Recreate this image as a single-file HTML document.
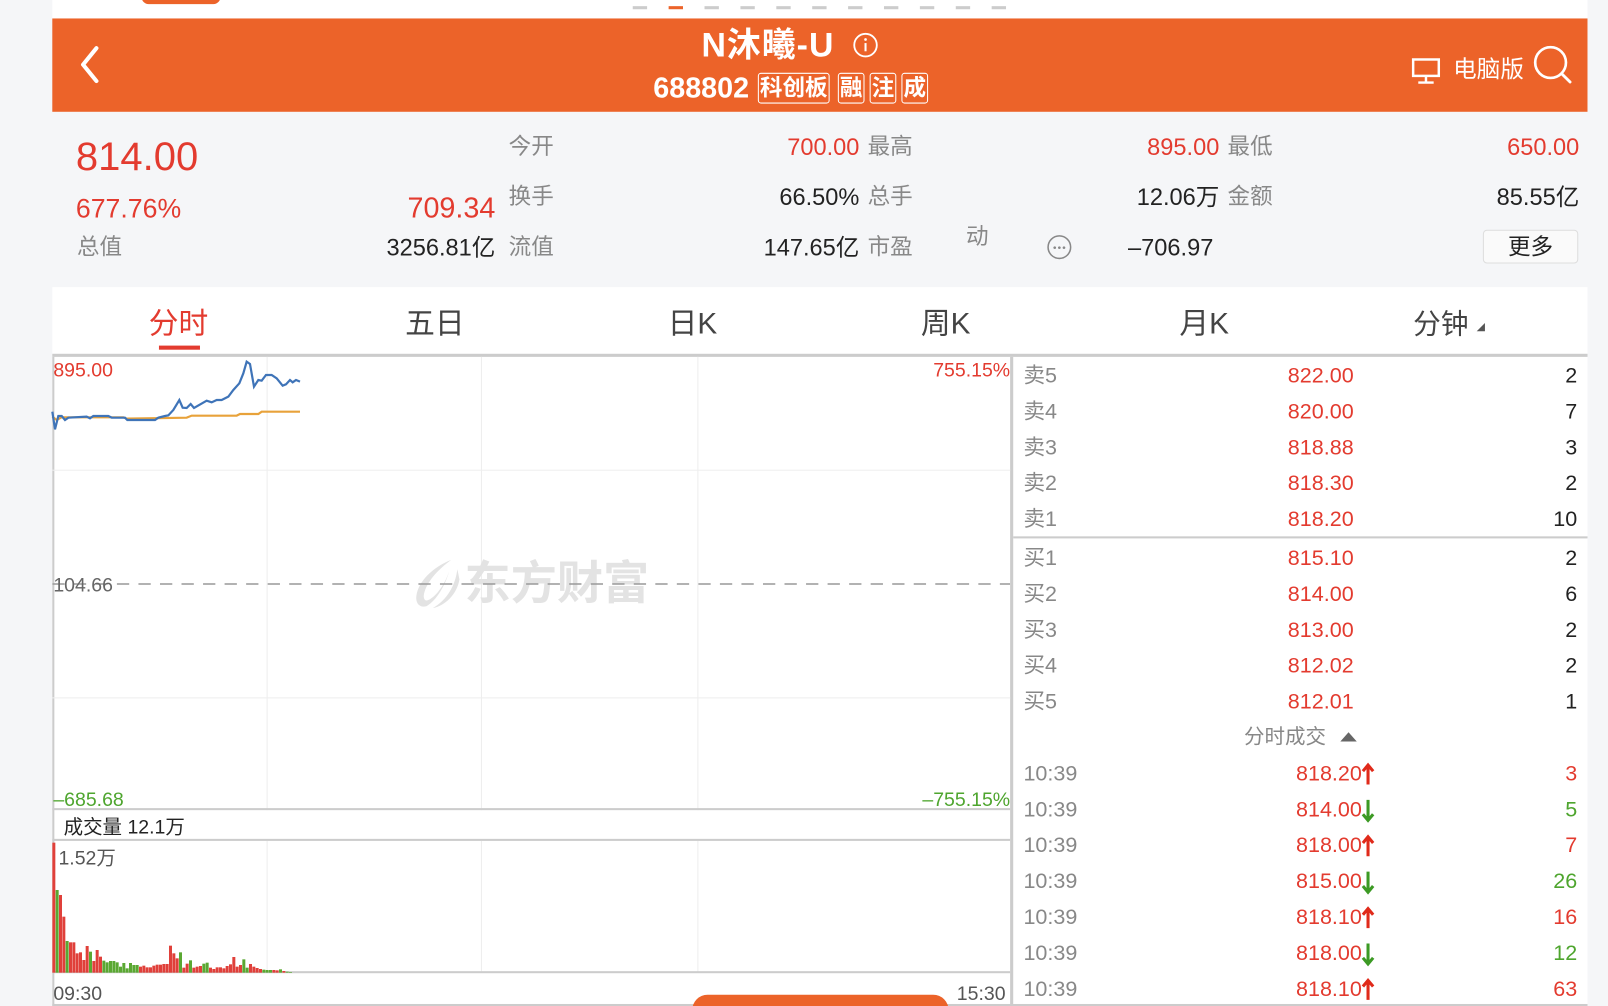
<!DOCTYPE html>
<html><head><meta charset="utf-8"><style>
html,body{margin:0;padding:0;width:1608px;height:1006px;overflow:hidden;background:#f5f6f8;}
#w{position:absolute;left:0;top:0;width:1568px;height:981px;overflow:hidden;transform:scale(1.02551);transform-origin:0 0;font-family:"Liberation Sans","Noto Sans CJK SC",sans-serif;}
.a{position:absolute;white-space:nowrap;line-height:1;}
.r{color:#e33b2f}.g{color:#4ea52e}.k{color:#222}.gr{color:#888}
.ra{text-align:right}
.lb{font-size:22px;color:#888;}
.v{font-size:23px;}
.ob{font-size:21px;}
.tab{font-size:29px;color:#444;top:302px}
</style></head><body>
<div id="w">
<div class="a" style="left:51px;top:0;width:1497px;height:18px;background:#fff"></div>
<div class="a" style="left:138px;top:-10px;width:77px;height:14px;background:#ec6329;border-radius:7px"></div>
<div class="a" style="left:617px;top:6px;width:14px;height:3px;background:#ccc;box-shadow:70px 0 #ccc,105px 0 #ccc,140px 0 #ccc,175px 0 #ccc,210px 0 #ccc,245px 0 #ccc,280px 0 #ccc,315px 0 #ccc,350px 0 #ccc"></div>
<div class="a" style="left:652px;top:6px;width:14px;height:3px;background:#ec6329"></div>
<div class="a" style="left:51px;top:18px;width:1497px;height:91px;background:#ec6329"></div>
<svg class="a" style="left:72px;top:42px" width="30" height="42"><path d="M22 5 L9 21 L22 37" stroke="#fff" stroke-width="4" fill="none" stroke-linecap="round" stroke-linejoin="round"/></svg>
<div class="a" style="left:684px;top:27px;font-size:33px;font-weight:bold;color:#fff;letter-spacing:1px">N沐曦-U</div>
<svg class="a" style="left:831px;top:31px" width="26" height="26"><circle cx="13" cy="13" r="11" stroke="#fff" stroke-width="1.8" fill="none"/><rect x="12" y="11" width="2" height="8" fill="#fff"/><circle cx="13" cy="7.5" r="1.3" fill="#fff"/></svg>
<div class="a" style="left:637px;top:72px;font-size:28px;font-weight:bold;color:#fff">688802</div>
<div class="a" style="left:739px;top:71px;height:28px;border:1.5px solid #fff;border-radius:3px;font-size:22px;font-weight:bold;color:#fff;line-height:28px;padding:0 1px">科创板</div>
<div class="a" style="left:817px;top:71px;height:28px;border:1.5px solid #fff;border-radius:3px;font-size:22px;font-weight:bold;color:#fff;line-height:28px;padding:0 1px">融</div>
<div class="a" style="left:848px;top:71px;height:28px;border:1.5px solid #fff;border-radius:3px;font-size:22px;font-weight:bold;color:#fff;line-height:28px;padding:0 1px">注</div>
<div class="a" style="left:879px;top:71px;height:28px;border:1.5px solid #fff;border-radius:3px;font-size:22px;font-weight:bold;color:#fff;line-height:28px;padding:0 1px">成</div>
<svg class="a" style="left:1376px;top:56px" width="30" height="27"><rect x="2" y="2" width="25" height="16" stroke="#fff" stroke-width="2.4" fill="none"/><path d="M14.5 18 V24 M7 24.5 H22" stroke="#fff" stroke-width="2.4"/></svg>
<div class="a" style="left:1417px;top:56px;font-size:23px;color:#fff">电脑版</div>
<svg class="a" style="left:1493px;top:42px" width="42" height="42"><circle cx="19" cy="19" r="15" stroke="#fff" stroke-width="2.6" fill="none"/><path d="M30 30 L38 38" stroke="#fff" stroke-width="2.8" stroke-linecap="round"/></svg>

<div class="a r" style="left:74px;top:134px;font-size:39px">814.00</div>
<div class="a r" style="left:74px;top:190px;font-size:26px">677.76%</div>
<div class="a r ra" style="left:330px;width:153px;top:189px;font-size:28px">709.34</div>
<div class="a lb" style="left:75px;top:230px">总值</div>
<div class="a k ra v" style="left:300px;width:183px;top:230px">3256.81亿</div>
<div class="a lb" style="left:496px;top:132px">今开</div>
<div class="a lb" style="left:496px;top:181px">换手</div>
<div class="a lb" style="left:496px;top:230px">流值</div>
<div class="a r ra v" style="left:638px;width:200px;top:132px">700.00</div>
<div class="a k ra v" style="left:638px;width:200px;top:181px">66.50%</div>
<div class="a k ra v" style="left:638px;width:200px;top:230px">147.65亿</div>
<div class="a lb" style="left:846px;top:132px">最高</div>
<div class="a lb" style="left:846px;top:181px">总手</div>
<div class="a lb" style="left:846px;top:230px">市盈</div>
<div class="a lb" style="left:942px;top:220px">动</div>
<svg class="a" style="left:1020px;top:228px" width="26" height="26"><circle cx="13" cy="13" r="11" stroke="#888" stroke-width="1.5" fill="none"/><circle cx="8.5" cy="13.5" r="1.3" fill="#888"/><circle cx="13" cy="13.5" r="1.3" fill="#888"/><circle cx="17.5" cy="13.5" r="1.3" fill="#888"/></svg>
<div class="a k v" style="left:1100px;top:230px">–706.97</div>
<div class="a r ra v" style="left:989px;width:200px;top:132px">895.00</div>
<div class="a k ra v" style="left:989px;width:200px;top:181px">12.06万</div>
<div class="a lb" style="left:1197px;top:132px">最低</div>
<div class="a lb" style="left:1197px;top:181px">金额</div>
<div class="a r ra v" style="left:1340px;width:200px;top:132px">650.00</div>
<div class="a k ra v" style="left:1340px;width:200px;top:181px">85.55亿</div>
<div class="a" style="left:1446px;top:224px;width:91px;height:31px;border:1px solid #ddd;border-radius:4px;background:#fafafa;font-size:22px;color:#222;text-align:center;line-height:31px">更多</div>

<div class="a" style="left:51px;top:280px;width:1497px;height:65px;background:#fff"></div>
<div class="a r" style="left:145px;top:302px;font-size:29px">分时</div>
<div class="a" style="left:155px;top:337px;width:40px;height:4px;background:#e33b2f"></div>
<div class="a tab" style="left:395px">五日</div>
<div class="a tab" style="left:651px">日K</div>
<div class="a tab" style="left:898px">周K</div>
<div class="a tab" style="left:1150px">月K</div>
<div class="a tab" style="left:1378px;font-size:27px;top:303px">分钟</div>
<svg class="a" style="left:1438px;top:313px" width="12" height="12"><path d="M2 10 L10 10 L10 2 Z" fill="#555"/></svg>

<div class="a" style="left:51px;top:345px;width:1497px;height:636px;background:#fff"></div>
<div class="a" style="left:51px;top:345px;width:1497px;height:3px;background:#ccc"></div>
<div class="a" style="left:51px;top:348px;width:2px;height:633px;background:#ccc"></div>
<div class="a" style="left:985px;top:348px;width:3px;height:633px;background:#ccc"></div>
<div class="a" style="left:260px;top:348px;width:1px;height:442px;background:#eee"></div>
<div class="a" style="left:469px;top:348px;width:1px;height:442px;background:#eee"></div>
<div class="a" style="left:680px;top:348px;width:1px;height:442px;background:#eee"></div>
<div class="a" style="left:260px;top:820px;width:1px;height:128px;background:#eee"></div>
<div class="a" style="left:469px;top:820px;width:1px;height:128px;background:#eee"></div>
<div class="a" style="left:680px;top:820px;width:1px;height:128px;background:#eee"></div>
<div class="a" style="left:51px;top:458px;width:934px;height:1px;background:#eee"></div>
<div class="a" style="left:51px;top:680px;width:934px;height:1px;background:#eee"></div>
<svg class="a" style="left:400px;top:543px" width="52" height="52"><path d="M40 3 C22 10 8 24 6 38 C5 46 10 50 16 48 C26 42 34 28 38 14 C34 26 26 38 18 42 C14 44 12 40 14 34 C18 22 28 12 40 3 Z" fill="#e3e3e3"/><path d="M46 12 C44 28 36 42 22 50 C34 48 46 36 48 22 Z" fill="#e3e3e3"/></svg>
<div class="a" style="left:453px;top:546px;font-size:45px;font-weight:bold;color:#e3e3e3">东方财富</div>
<svg class="a" style="left:51px;top:568px" width="934" height="3"><line x1="0" y1="1.5" x2="934" y2="1.5" stroke="#999" stroke-width="1.5" stroke-dasharray="12 9"/></svg>
<div class="a" style="left:51px;top:788px;width:934px;height:2px;background:#ccc"></div>
<div class="a" style="left:51px;top:818px;width:934px;height:2px;background:#ccc"></div>
<div class="a" style="left:51px;top:947px;width:934px;height:2px;background:#ccc"></div>
<div class="a" style="left:51px;top:979px;width:1497px;height:2px;background:#ccc"></div>
<div class="a r" style="left:52px;top:352px;font-size:19px">895.00</div>
<div class="a r ra" style="left:880px;width:105px;top:352px;font-size:19px">755.15%</div>
<div class="a" style="left:52px;top:562px;font-size:19px;color:#666">104.66</div>
<div class="a g" style="left:52px;top:771px;font-size:19px">–685.68</div>
<div class="a g ra" style="left:860px;width:125px;top:771px;font-size:19px">–755.15%</div>
<div class="a" style="left:62px;top:798px;font-size:19px;color:#222">成交量 12.1万</div>
<div class="a" style="left:57px;top:828px;font-size:19px;color:#555">1.52万</div>
<div class="a" style="left:52px;top:960px;font-size:19px;color:#555">09:30</div>
<div class="a" style="left:933px;top:960px;font-size:19px;color:#555">15:30</div>
<div class="a" style="left:675px;top:970px;width:250px;height:30px;background:#ec6329;border-radius:15px"></div>

<div class="a" style="left:988px;top:523px;width:560px;height:2px;background:#ccc"></div>
<div class="a ob gr" style="left:998px;top:356px">卖5</div><div class="a ob r ra" style="left:1200px;width:120px;top:356px">822.00</div><div class="a ob k ra" style="left:1440px;width:98px;top:356px">2</div>
<div class="a ob gr" style="left:998px;top:391px">卖4</div><div class="a ob r ra" style="left:1200px;width:120px;top:391px">820.00</div><div class="a ob k ra" style="left:1440px;width:98px;top:391px">7</div>
<div class="a ob gr" style="left:998px;top:426px">卖3</div><div class="a ob r ra" style="left:1200px;width:120px;top:426px">818.88</div><div class="a ob k ra" style="left:1440px;width:98px;top:426px">3</div>
<div class="a ob gr" style="left:998px;top:461px">卖2</div><div class="a ob r ra" style="left:1200px;width:120px;top:461px">818.30</div><div class="a ob k ra" style="left:1440px;width:98px;top:461px">2</div>
<div class="a ob gr" style="left:998px;top:496px">卖1</div><div class="a ob r ra" style="left:1200px;width:120px;top:496px">818.20</div><div class="a ob k ra" style="left:1440px;width:98px;top:496px">10</div>
<div class="a ob gr" style="left:998px;top:534px">买1</div><div class="a ob r ra" style="left:1200px;width:120px;top:534px">815.10</div><div class="a ob k ra" style="left:1440px;width:98px;top:534px">2</div>
<div class="a ob gr" style="left:998px;top:569px">买2</div><div class="a ob r ra" style="left:1200px;width:120px;top:569px">814.00</div><div class="a ob k ra" style="left:1440px;width:98px;top:569px">6</div>
<div class="a ob gr" style="left:998px;top:604px">买3</div><div class="a ob r ra" style="left:1200px;width:120px;top:604px">813.00</div><div class="a ob k ra" style="left:1440px;width:98px;top:604px">2</div>
<div class="a ob gr" style="left:998px;top:639px">买4</div><div class="a ob r ra" style="left:1200px;width:120px;top:639px">812.02</div><div class="a ob k ra" style="left:1440px;width:98px;top:639px">2</div>
<div class="a ob gr" style="left:998px;top:674px">买5</div><div class="a ob r ra" style="left:1200px;width:120px;top:674px">812.01</div><div class="a ob k ra" style="left:1440px;width:98px;top:674px">1</div>
<div class="a ob gr" style="left:1213px;top:709px;font-size:20px">分时成交</div>
<svg class="a" style="left:1306px;top:711px" width="18" height="14"><path d="M1 12 L9 3 L17 12 Z" fill="#666"/></svg>

<div class="a ob gr" style="left:998px;top:744px">10:39</div><div class="a ob r ra" style="left:1200px;width:128px;top:744px">818.20</div><div class="a ob r ra" style="left:1440px;width:98px;top:744px">3</div>
<div class="a ob gr" style="left:998px;top:779px">10:39</div><div class="a ob r ra" style="left:1200px;width:128px;top:779px">814.00</div><div class="a ob g ra" style="left:1440px;width:98px;top:779px">5</div>
<div class="a ob gr" style="left:998px;top:814px">10:39</div><div class="a ob r ra" style="left:1200px;width:128px;top:814px">818.00</div><div class="a ob r ra" style="left:1440px;width:98px;top:814px">7</div>
<div class="a ob gr" style="left:998px;top:849px">10:39</div><div class="a ob r ra" style="left:1200px;width:128px;top:849px">815.00</div><div class="a ob g ra" style="left:1440px;width:98px;top:849px">26</div>
<div class="a ob gr" style="left:998px;top:884px">10:39</div><div class="a ob r ra" style="left:1200px;width:128px;top:884px">818.10</div><div class="a ob r ra" style="left:1440px;width:98px;top:884px">16</div>
<div class="a ob gr" style="left:998px;top:919px">10:39</div><div class="a ob r ra" style="left:1200px;width:128px;top:919px">818.00</div><div class="a ob g ra" style="left:1440px;width:98px;top:919px">12</div>
<div class="a ob gr" style="left:998px;top:954px">10:39</div><div class="a ob r ra" style="left:1200px;width:128px;top:954px">818.10</div><div class="a ob r ra" style="left:1440px;width:98px;top:954px">63</div>
<svg class="a" style="left:1327px;top:743px" width="16" height="236">
<g stroke-width="3" fill="none">
<path d="M7 4 V22 M2 9 L7 3 L12 9" stroke="#e02a1a"/>
<path d="M7 37 V56 M2 51 L7 57 L12 51" stroke="#3c9a24"/>
<path d="M7 74 V92 M2 79 L7 73 L12 79" stroke="#e02a1a"/>
<path d="M7 107 V126 M2 121 L7 127 L12 121" stroke="#3c9a24"/>
<path d="M7 144 V162 M2 149 L7 143 L12 149" stroke="#e02a1a"/>
<path d="M7 177 V196 M2 191 L7 197 L12 191" stroke="#3c9a24"/>
<path d="M7 214 V232 M2 219 L7 213 L12 219" stroke="#e02a1a"/>
</g></svg>
</div>

<svg style="position:absolute;left:0;top:0" width="1608" height="1006">
<g transform="translate(40,340) scale(0.33333)" fill="none">
<polyline vector-effect="non-scaling-stroke" stroke-width="2.2" stroke="#e8a23a" points="37,230 50,240 65,232 250,232 260,236 440,233 455,227 590,227 600,222 655,222 665,215 780,215"/>
<polyline vector-effect="non-scaling-stroke" stroke-width="2.2" stroke="#3f74b8" points="37,215 45,268 55,228 65,228 75,240 85,233 140,230 150,235 160,228 205,228 215,233 255,233 262,240 345,240 355,233 375,228 385,226 400,210 418,180 428,203 440,204 452,192 462,204 500,182 515,187 530,180 545,180 565,170 580,150 598,130 610,100 620,65 630,72 642,140 655,120 665,122 678,105 695,105 710,115 728,137 738,133 750,120 758,127 768,120 780,125"/>
</g>
<g transform="translate(40,790) scale(0.33333)">
<g fill="#e0403a">
<rect x="37" y="158" width="9" height="390"/><rect x="57" y="315" width="9" height="233"/><rect x="67" y="380" width="9" height="168"/><rect x="87" y="457" width="9" height="91"/><rect x="97" y="457" width="9" height="91"/><rect x="107" y="490" width="9" height="58"/><rect x="117" y="487" width="9" height="61"/><rect x="127" y="510" width="9" height="38"/><rect x="137" y="468" width="9" height="80"/><rect x="157" y="513" width="9" height="35"/><rect x="167" y="480" width="9" height="68"/><rect x="177" y="500" width="9" height="48"/>
<rect x="297" y="530" width="9" height="18"/><rect x="307" y="527" width="9" height="21"/><rect x="317" y="532" width="9" height="16"/><rect x="327" y="532" width="9" height="16"/><rect x="337" y="527" width="9" height="21"/><rect x="347" y="524" width="9" height="24"/><rect x="357" y="524" width="9" height="24"/><rect x="367" y="522" width="9" height="26"/><rect x="377" y="522" width="9" height="26"/><rect x="387" y="467" width="9" height="81"/><rect x="397" y="490" width="9" height="58"/><rect x="407" y="505" width="9" height="43"/><rect x="427" y="533" width="9" height="15"/><rect x="437" y="521" width="9" height="27"/><rect x="457" y="533" width="9" height="15"/><rect x="467" y="530" width="9" height="18"/><rect x="477" y="528" width="9" height="20"/><rect x="507" y="533" width="9" height="15"/><rect x="517" y="537" width="9" height="11"/><rect x="527" y="532" width="9" height="16"/><rect x="537" y="532" width="9" height="16"/><rect x="547" y="535" width="9" height="13"/><rect x="557" y="528" width="9" height="20"/><rect x="567" y="523" width="9" height="25"/><rect x="577" y="501" width="9" height="47"/><rect x="587" y="530" width="9" height="18"/><rect x="597" y="525" width="9" height="23"/><rect x="627" y="522" width="9" height="26"/><rect x="637" y="530" width="9" height="18"/><rect x="647" y="534" width="9" height="14"/><rect x="657" y="537" width="9" height="11"/><rect x="697" y="540" width="9" height="8"/><rect x="707" y="541" width="9" height="7"/><rect x="727" y="543" width="9" height="5"/>
</g>
<g fill="#5aa832">
<rect x="47" y="300" width="9" height="248"/><rect x="77" y="453" width="9" height="95"/><rect x="147" y="485" width="9" height="63"/><rect x="187" y="512" width="9" height="36"/><rect x="197" y="517" width="9" height="31"/><rect x="207" y="513" width="9" height="35"/><rect x="217" y="513" width="9" height="35"/><rect x="227" y="517" width="9" height="31"/><rect x="237" y="530" width="9" height="18"/><rect x="247" y="519" width="9" height="29"/><rect x="257" y="535" width="9" height="13"/><rect x="267" y="519" width="9" height="29"/><rect x="277" y="525" width="9" height="23"/><rect x="287" y="525" width="9" height="23"/><rect x="417" y="487" width="9" height="61"/><rect x="447" y="511" width="9" height="37"/><rect x="487" y="521" width="9" height="27"/><rect x="497" y="518" width="9" height="30"/><rect x="607" y="508" width="9" height="40"/><rect x="617" y="533" width="9" height="15"/><rect x="667" y="539" width="9" height="9"/><rect x="677" y="540" width="9" height="8"/><rect x="687" y="540" width="9" height="8"/><rect x="717" y="538" width="9" height="10"/><rect x="737" y="545" width="9" height="3"/><rect x="747" y="546" width="9" height="2"/>
</g>
</g>
</svg>
</body></html>
